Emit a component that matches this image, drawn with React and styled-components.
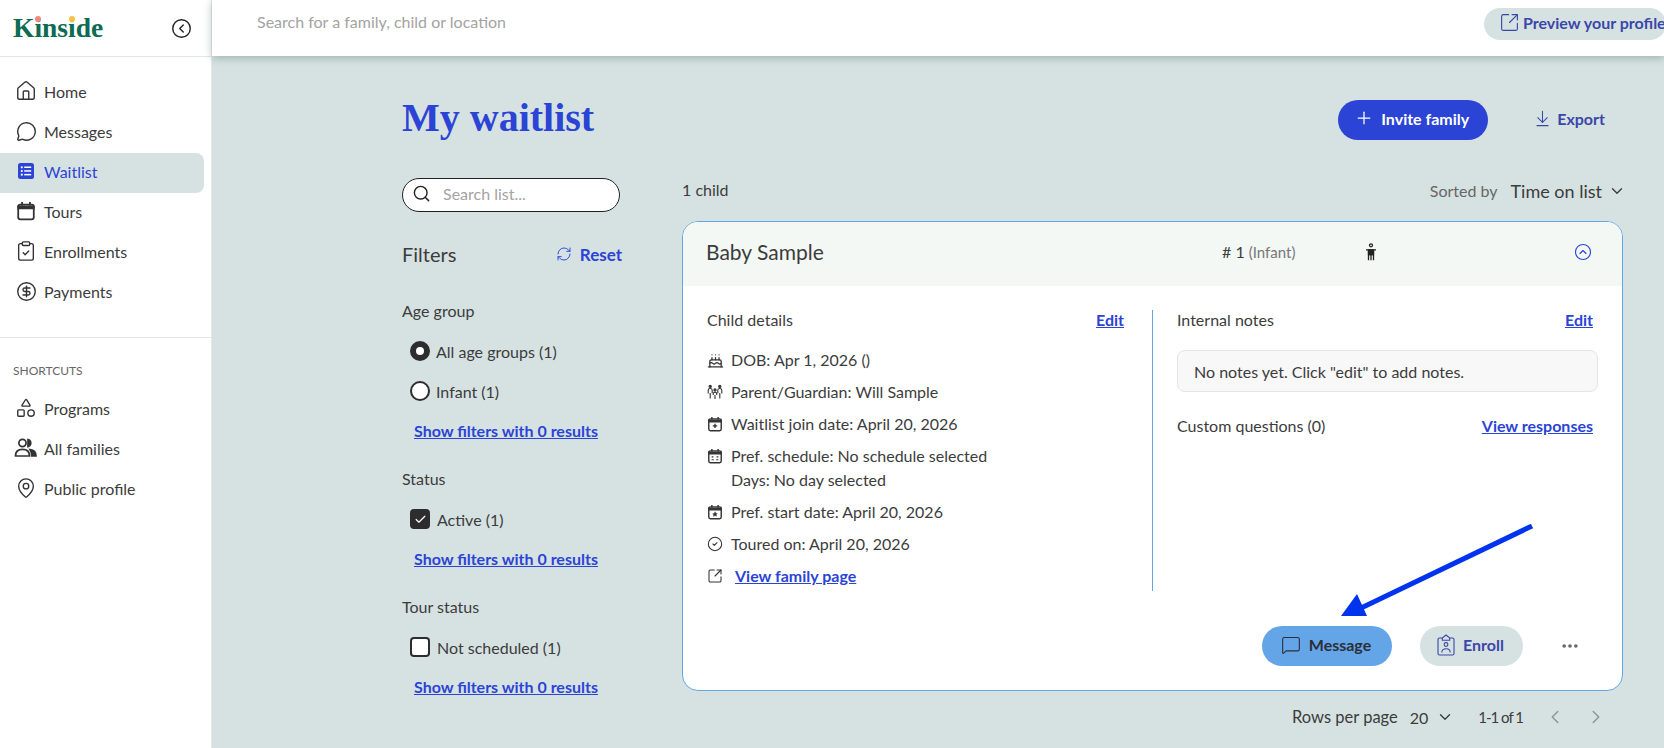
import React from 'react'
import styled, { createGlobalStyle } from 'styled-components'
import {
  House, MessageCircle, ClipboardCheck, CircleDollarSign, Shapes, MapPin, CircleChevronLeft, Search,
  RefreshCw, Cake, SquareArrowOutUpRight, CircleCheck, MessageSquare, ArrowDownToLine, Plus, Ellipsis,
  ChevronDown, ChevronLeft, ChevronRight, CircleChevronUp, Check,
} from 'lucide-react'

const vars = {
  bg: '#d6e2e2',
  blue: '#2b44d6',
  indigo: '#3b47a8',
  text: '#3c3c3c',
  sky: '#64a5e8',
  font: `Lato, 'Open Sans', sans-serif`,
}

const GlobalStyle = createGlobalStyle`
  html, body { margin: 0; height: 100%; overflow: hidden; }
  body { font-family: ${vars.font}; color: ${vars.text}; background: ${vars.bg}; font-size: 16px; }
  * { box-sizing: border-box; }
`

const ListIcon = () => (
  <svg width="16" height="16" viewBox="0 0 16 16">
    <rect width="16" height="16" rx="2.5" fill={vars.blue} />
    <g fill="#fff">
      <circle cx="3.8" cy="4.3" r="1.1" /><circle cx="3.8" cy="8" r="1.1" /><circle cx="3.8" cy="11.7" r="1.1" />
      <rect x="6.2" y="3.5" width="7" height="1.5" /><rect x="6.2" y="7.2" width="7" height="1.5" /><rect x="6.2" y="10.9" width="7" height="1.5" />
    </g>
  </svg>
)

const CalendarIcon = ({ size = 18, inner }) => (
  <svg width={size} height={size} viewBox="0 0 18 18" fill="none" stroke="#333" strokeWidth="1.6">
    <rect x="2" y="3.2" width="14" height="13.3" rx="1.8" />
    <path d="M2 4.8h14v1.8H2z" fill="#333" />
    <path d="M5.5 1v3M12.5 1v3" />
    {inner === 'plus' && <path d="M9 8.6v5M6.5 11.1h5" strokeWidth="1.5" />}
    {inner === 'lines' && <path d="M5.2 10h2M10.8 10h2M5.2 13.2h2.4M10.4 13.2h2.4" strokeWidth="1.3" />}
    {inner === 'star' && <path d="M9 8.8l.8 1.7 1.8.2-1.3 1.2.4 1.8L9 13l-1.7.9.4-1.8-1.3-1.2 1.8-.2z" fill="#333" strokeWidth="0.5" />}
  </svg>
)

const FamiliesIcon = () => (
  <svg width="24" height="20" viewBox="0 0 24 20" fill="none" stroke="#333" strokeWidth="1.7">
    <circle cx="8.5" cy="5" r="3.6" />
    <path d="M1.5 18c0-4.5 3-6.6 7-6.6s7 2.1 7 6.6z" />
    <path d="M14 1.6a3.6 3.6 0 0 1 0 7z" fill="#333" />
    <path d="M16 11.5c3.6.3 6 2.4 6 6.5h-4.2c0-2.5-.7-4.7-1.8-6.5z" fill="#333" />
  </svg>
)

const FamilyIcon = () => (
  <svg width="16" height="16" viewBox="0 0 16 16" fill="none" stroke="#333" strokeWidth="1.1">
    <circle cx="3.2" cy="2.4" r="1.1" fill="#333" /><circle cx="12.8" cy="2.4" r="1.1" fill="#333" /><circle cx="8" cy="6" r="1.1" fill="#333" />
    <path d="M1.2 9.5V6.3q0-1.8 2-1.8t2 1.8v3M3.2 9v5.5M10.8 9.3v-3q0-1.8 2-1.8t2 1.8v3.2M12.8 9v5.5" />
    <path d="M6.3 11V9.3q0-1 1.7-1t1.7 1V11M8 11v4" />
  </svg>
)

const EnrollIcon = () => (
  <svg width="18" height="22" viewBox="0 0 18 22" fill="none" stroke={vars.indigo} strokeWidth="1.1">
    <path d="M2.5 4h2.8L9 1l3.7 3h2.8A1.5 1.5 0 0 1 17 5.5v14a1.5 1.5 0 0 1-1.5 1.5h-13A1.5 1.5 0 0 1 1 19.5v-14A1.5 1.5 0 0 1 2.5 4z" />
    <path d="M5.3 4v2.2h7.4V4" />
    <circle cx="9" cy="10.5" r="1.9" />
    <path d="M4.8 18.5c0-2.6 1.8-3.8 4.2-3.8s4.2 1.2 4.2 3.8" />
  </svg>
)

const ChildIcon = () => (
  <svg width="12" height="18" viewBox="0 0 12 18" fill="none" stroke="#222" strokeWidth="1.3">
    <circle cx="6" cy="2.3" r="1.5" />
    <path d="M1 6.8h10M3.5 6.8v10.5M8.5 6.8v10.5M3.5 11.5h5M6 11.5v5.8" />
    <path d="M3.5 6.8h5v4.7h-5z" fill="#222" />
  </svg>
)

const navItems = [
  { label: 'Home', icon: <House size={22} strokeWidth={1.5} /> },
  { label: 'Messages', icon: <MessageCircle size={21} strokeWidth={1.6} /> },
  { label: 'Waitlist', icon: <ListIcon />, active: true },
  { label: 'Tours', icon: <CalendarIcon size={20} /> },
  { label: 'Enrollments', icon: <ClipboardCheck size={22} strokeWidth={1.5} /> },
  { label: 'Payments', icon: <CircleDollarSign size={21} strokeWidth={1.6} /> },
]

const shortcuts = [
  { label: 'Programs', icon: <Shapes size={22} strokeWidth={1.5} /> },
  { label: 'All families', icon: <FamiliesIcon /> },
  { label: 'Public profile', icon: <MapPin size={22} strokeWidth={1.5} /> },
]

const details = [
  { icon: <Cake size={17} strokeWidth={1.8} />, lines: ['DOB: Apr 1, 2026 ()'] },
  { icon: <FamilyIcon />, lines: ['Parent/Guardian: Will Sample'] },
  { icon: <CalendarIcon size={16} inner="plus" />, lines: ['Waitlist join date: April 20, 2026'] },
  { icon: <CalendarIcon size={16} inner="lines" />, lines: ['Pref. schedule: No schedule selected', 'Days: No day selected'] },
  { icon: <CalendarIcon size={16} inner="star" />, lines: ['Pref. start date: April 20, 2026'] },
  { icon: <CircleCheck size={16} strokeWidth={1.6} />, lines: ['Toured on: April 20, 2026'] },
]

const App = () => {
  return (
    <>
      <GlobalStyle />
      <Page>
        <Sidebar>
          <Brand>
            <Logo>Kinside<LogoDot $left={22} $color="#ef8a80" /><LogoDot $left={56} $color="#f4c244" /></Logo>
            <CircleChevronLeft size={21} strokeWidth={1.6} color="#222" />
          </Brand>
          <Nav>
            {navItems.map((item) => (
              <NavItem key={item.label} $active={item.active}>
                <NavIcon>{item.icon}</NavIcon>{item.label}
              </NavItem>
            ))}
          </Nav>
          <Divider />
          <ShortcutTitle>SHORTCUTS</ShortcutTitle>
          {shortcuts.map((item) => (
            <NavItem key={item.label}>
              <NavIcon>{item.icon}</NavIcon>{item.label}
            </NavItem>
          ))}
        </Sidebar>
        <Main>
          <TopBar>
            <TopSearch>Search for a family, child or location</TopSearch>
            <PreviewPill><SquareArrowOutUpRight size={21} strokeWidth={1.3} />Preview your profile</PreviewPill>
          </TopBar>
          <Content>
            <TitleRow>
              <Title>My waitlist</Title>
              <TitleActions>
                <InviteButton><Plus size={20} strokeWidth={1.5} />Invite family</InviteButton>
                <ExportLink><ArrowDownToLine size={19} strokeWidth={1.3} />Export</ExportLink>
              </TitleActions>
            </TitleRow>
            <Columns>
              <Filters>
                <ListSearch>
                  <Search size={19} strokeWidth={1.8} color="#222" />
                  <span>Search list...</span>
                </ListSearch>
                <FiltersHead>
                  <FiltersTitle>Filters</FiltersTitle>
                  <ResetLink><RefreshCw size={16} strokeWidth={1.4} />Reset</ResetLink>
                </FiltersHead>
                <FilterGroup>
                  <GroupTitle>Age group</GroupTitle>
                  <Option><Radio $checked />All age groups (1)</Option>
                  <Option><Radio />Infant (1)</Option>
                  <ZeroLink>Show filters with 0 results</ZeroLink>
                </FilterGroup>
                <FilterGroup>
                  <GroupTitle>Status</GroupTitle>
                  <Option><CheckBox $checked><Check size={13} strokeWidth={2.2} color="#fff" /></CheckBox>Active (1)</Option>
                  <ZeroLink>Show filters with 0 results</ZeroLink>
                </FilterGroup>
                <FilterGroup>
                  <GroupTitle>Tour status</GroupTitle>
                  <Option><CheckBox />Not scheduled (1)</Option>
                  <ZeroLink>Show filters with 0 results</ZeroLink>
                </FilterGroup>
              </Filters>
              <Results>
                <ResultsHead>
                  <span>1 child</span>
                  <SortBy>
                    <SortLabel>Sorted by</SortLabel>
                    <SortValue>Time on list</SortValue>
                    <ChevronDown size={18} strokeWidth={1.8} />
                  </SortBy>
                </ResultsHead>
                <Card>
                  <CardHead>
                    <ChildName>Baby Sample</ChildName>
                    <Rank># 1 <RankGroup>(Infant)</RankGroup></Rank>
                    <ChildSlot><ChildIcon /></ChildSlot>
                    <Toggle><CircleChevronUp size={18} strokeWidth={1.5} /></Toggle>
                  </CardHead>
                  <CardBody>
                    <DetailsColumn>
                      <SectionHead>Child details<TextLink>Edit</TextLink></SectionHead>
                      <DetailList>
                        {details.map((row) => (
                          <DetailRow key={row.lines[0]}>
                            <DetailIcon>{row.icon}</DetailIcon>
                            <div>{row.lines.map((line) => <div key={line}>{line}</div>)}</div>
                          </DetailRow>
                        ))}
                        <DetailRow>
                          <DetailIcon><SquareArrowOutUpRight size={16} strokeWidth={1.6} /></DetailIcon>
                          <FamilyLink>View family page</FamilyLink>
                        </DetailRow>
                      </DetailList>
                    </DetailsColumn>
                    <NotesColumn>
                      <SectionHead $inset>Internal notes<TextLink>Edit</TextLink></SectionHead>
                      <NotesBox>No notes yet. Click "edit" to add notes.</NotesBox>
                      <QuestionsHead $inset>Custom questions (0)<TextLink>View responses</TextLink></QuestionsHead>
                    </NotesColumn>
                  </CardBody>
                  <CardActions>
                    <MessageButton><MessageSquare size={20} strokeWidth={1.3} />Message</MessageButton>
                    <EnrollButton><EnrollIcon />Enroll</EnrollButton>
                    <MoreButton><Ellipsis size={20} strokeWidth={2.4} /></MoreButton>
                  </CardActions>
                  <Pointer width="200" height="100" viewBox="0 0 200 100">
                    <path d="M191 2 L18 85" stroke="#0033ee" strokeWidth="5" />
                    <path d="M0 92 L16 70 L26 92 Z" fill="#0033ee" />
                  </Pointer>
                </Card>
                <Pagination>
                  <RowsLabel>Rows per page</RowsLabel>
                  <RowsValue>20<ChevronDown size={18} strokeWidth={1.8} /></RowsValue>
                  <PageCount>1-1 of 1</PageCount>
                  <PageArrows>
                    <ChevronLeft size={22} strokeWidth={1.6} />
                    <ChevronRight size={22} strokeWidth={1.6} />
                  </PageArrows>
                </Pagination>
              </Results>
            </Columns>
          </Content>
        </Main>
      </Page>
    </>
  )
}

const Page = styled.div`
  display: flex;
  width: 1664px;
  height: 748px;
  overflow: hidden;
`

const Sidebar = styled.aside`
  width: 212px;
  flex-shrink: 0;
  background: #fff;
  border-right: 1px solid #e4e8ea;
`

const Brand = styled.div`
  height: 57px;
  padding: 0 19px 0 13px;
  display: flex;
  align-items: center;
  justify-content: space-between;
  border-bottom: 1px solid #e2e6e8;
`

const Logo = styled.div`
  position: relative;
  font-family: 'Liberation Serif', serif;
  font-weight: 700;
  font-size: 27.5px;
  line-height: 30px;
  color: #0b6b53;
`

const LogoDot = styled.span`
  position: absolute;
  left: ${(p) => p.$left}px;
  top: 3px;
  width: 6px;
  height: 6px;
  border-radius: 50%;
  background: ${(p) => p.$color};
`

const Nav = styled.nav`
  padding-top: 16px;
`

const NavItem = styled.div`
  width: 204px;
  height: 40px;
  padding: 0 0 4px 14px;
  display: flex;
  align-items: center;
  gap: 6px;
  border-radius: 0 8px 8px 0;
  background: ${(p) => (p.$active ? vars.bg : 'transparent')};
  color: ${(p) => (p.$active ? vars.blue : vars.text)};
`

const NavIcon = styled.span`
  width: 24px;
  display: flex;
  align-items: center;
  justify-content: center;
  color: #333;
`

const Divider = styled.div`
  height: 1px;
  margin-top: 24px;
  background: #e2e6e8;
`

const ShortcutTitle = styled.div`
  margin: 25px 0 11px 13px;
  font-size: 12px;
  line-height: 16px;
  color: #666;
`

const Main = styled.div`
  flex: 1;
  min-width: 0;
`

const TopBar = styled.header`
  position: relative;
  height: 56px;
  padding-left: 45px;
  display: flex;
  align-items: center;
  overflow: hidden;
  background: #fff;
  box-shadow: 0 2px 8px rgba(90, 115, 115, 0.45);
`

const TopSearch = styled.div`
  width: 1227px;
  flex-shrink: 0;
  color: #a3a3a3;
  margin-top: -14px;
`

const PreviewPill = styled.div`
  height: 32px;
  margin-top: -8px;
  padding: 0 0 3px 15px;
  flex-shrink: 0;
  display: flex;
  align-items: center;
  gap: 3px;
  border-radius: 16px;
  background: ${vars.bg};
  color: ${vars.indigo};
  font-weight: 700;
  white-space: nowrap;
`

const Content = styled.div`
  padding: 44px 41px 0 190px;
`

const TitleRow = styled.div`
  height: 40px;
  display: flex;
  align-items: center;
  justify-content: space-between;
`

const Title = styled.h1`
  margin: 0 0 6px;
  font-family: 'Liberation Serif', serif;
  font-weight: 700;
  font-size: 40px;
  color: ${vars.blue};
`

const TitleActions = styled.div`
  display: flex;
  align-items: center;
  gap: 45px;
  margin-right: 18px;
`

const InviteButton = styled.button`
  width: 150px;
  height: 40px;
  padding: 0 3px 4px 0;
  display: flex;
  align-items: center;
  justify-content: center;
  gap: 7px;
  border: 0;
  border-radius: 20px;
  background: ${vars.blue};
  color: #fff;
  font: 700 16px ${vars.font};
`

const ExportLink = styled.div`
  padding-bottom: 4px;
  display: flex;
  align-items: center;
  gap: 5px;
  color: ${vars.indigo};
  font-weight: 700;
`

const Columns = styled.div`
  display: grid;
  grid-template-columns: 280px 1fr;
  margin-top: 38px;
`

const Filters = styled.div`
  width: 220px;
`

const ListSearch = styled.div`
  width: 218px;
  height: 34px;
  padding: 0 0 3px 9px;
  display: flex;
  align-items: center;
  gap: 12px;
  background: #fff;
  border: 1px solid #222;
  border-radius: 17px;
  color: #a3a3a3;
`

const FiltersHead = styled.div`
  height: 28px;
  margin: 29px 0 30px;
  padding-bottom: 2px;
  display: flex;
  align-items: center;
  justify-content: space-between;
`

const FiltersTitle = styled.div`
  font-size: 20px;
`

const ResetLink = styled.div`
  display: flex;
  align-items: center;
  gap: 8px;
  color: ${vars.blue};
  font-size: 17px;
  font-weight: 700;
`

const FilterGroup = styled.section`
  margin-bottom: 16px;
`

const GroupTitle = styled.div`
  line-height: 24px;
  margin-bottom: 8px;
`

const Option = styled.div`
  height: 40px;
  padding-left: 8px;
  display: flex;
  align-items: center;
  gap: 7px;
`

const Radio = styled.span`
  width: 20px;
  height: 20px;
  margin-right: -1px;
  border-radius: 50%;
  background: #fff;
  border: ${(p) => (p.$checked ? '6px solid #2d2d2d' : '2px solid #2d2d2d')};
`

const CheckBox = styled.span`
  width: 20px;
  height: 20px;
  display: flex;
  align-items: center;
  justify-content: center;
  border-radius: 4px;
  background: ${(p) => (p.$checked ? '#2d2d2d' : '#fff')};
  border: 2px solid #2d2d2d;
`

const ZeroLink = styled.a`
  display: block;
  height: 40px;
  padding-left: 12px;
  line-height: 40px;
  color: ${vars.blue};
  font-weight: 700;
  text-decoration: underline;
`

const Results = styled.div`
  min-width: 0;
  margin-top: -1px;
`

const ResultsHead = styled.div`
  height: 24px;
  display: flex;
  align-items: center;
  justify-content: space-between;
`

const SortBy = styled.div`
  display: flex;
  align-items: center;
  margin-right: -3px;
  padding-top: 3px;
`

const SortLabel = styled.span`
  color: #666;
`

const SortValue = styled.span`
  margin: 0 6px 0 13px;
  font-size: 18px;
`

const Card = styled.article`
  position: relative;
  height: 470px;
  margin-top: 20px;
  overflow: hidden;
  background: #fff;
  border: 1px solid ${vars.sky};
  border-radius: 16px;
`

const CardHead = styled.div`
  height: 64px;
  padding: 0 0 5px 23px;
  display: flex;
  align-items: center;
  background: #f3f8f5;
`

const ChildName = styled.div`
  width: 516px;
  font-size: 21px;
`

const Rank = styled.div`
  width: 143px;
`

const RankGroup = styled.span`
  font-size: 15px;
  color: #777;
`

const ChildSlot = styled.div`
  width: 209px;
  display: flex;
`

const Toggle = styled.div`
  display: flex;
  color: ${vars.blue};
`

const CardBody = styled.div`
  display: flex;
  padding: 24px 24px 0;
`

const DetailsColumn = styled.div`
  display: flow-root;
  width: 446px;
  height: 281px;
  padding-right: 28px;
  border-right: 1px solid ${vars.sky};
`

const NotesColumn = styled.div`
  display: flow-root;
  flex: 1;
  padding-left: 24px;
`

const SectionHead = styled.div`
  height: 24px;
  margin-top: -3px;
  display: flex;
  align-items: center;
  justify-content: space-between;
  padding-right: ${(p) => (p.$inset ? '5px' : '0')};
`

const QuestionsHead = styled(SectionHead)`
  margin-top: 21px;
`

const TextLink = styled.a`
  color: ${vars.blue};
  font-weight: 700;
  text-decoration: underline;
`

const FamilyLink = styled(TextLink)`
  margin-left: 4px;
`

const DetailList = styled.div`
  margin-top: 17px;
  display: flex;
  flex-direction: column;
  gap: 8px;
`

const DetailRow = styled.div`
  display: flex;
  line-height: 24px;
`

const DetailIcon = styled.span`
  width: 24px;
  height: 24px;
  flex-shrink: 0;
  display: flex;
  align-items: center;
  color: #333;
`

const NotesBox = styled.div`
  height: 42px;
  margin-top: 19px;
  padding-left: 16px;
  display: flex;
  align-items: center;
  background: #f8f8f8;
  border: 1px solid #e3e5e6;
  border-radius: 8px;
`

const CardActions = styled.div`
  margin-top: 35px;
  padding-right: 40px;
  display: flex;
  align-items: center;
  justify-content: flex-end;
  gap: 28px;
`

const PillButton = styled.button`
  height: 40px;
  padding: 0 2px 3px 0;
  display: flex;
  align-items: center;
  justify-content: center;
  gap: 8px;
  border: 0;
  border-radius: 20px;
  font: 700 16px ${vars.font};
`

const MessageButton = styled(PillButton)`
  width: 130px;
  background: ${vars.sky};
  color: #2b2f38;
`

const EnrollButton = styled(PillButton)`
  width: 103px;
  background: ${vars.bg};
  color: ${vars.indigo};
`

const MoreButton = styled.div`
  width: 24px;
  margin-left: 7px;
  display: flex;
  justify-content: center;
  color: #666;
`

const Pointer = styled.svg`
  position: absolute;
  left: 658px;
  top: 302px;
`

const Pagination = styled.div`
  height: 52px;
  display: flex;
  align-items: center;
  justify-content: flex-end;
  padding-right: 16px;
`

const RowsLabel = styled.span`
  font-size: 16.5px;
`

const RowsValue = styled.div`
  display: flex;
  align-items: center;
  gap: 8px;
  margin-left: 12px;
`

const PageCount = styled.span`
  margin-left: 24px;
  letter-spacing: -1px;
  font-size: 15px;
`

const PageArrows = styled.div`
  display: flex;
  gap: 19px;
  margin-left: 21px;
  color: #8d9494;
`

export default App
